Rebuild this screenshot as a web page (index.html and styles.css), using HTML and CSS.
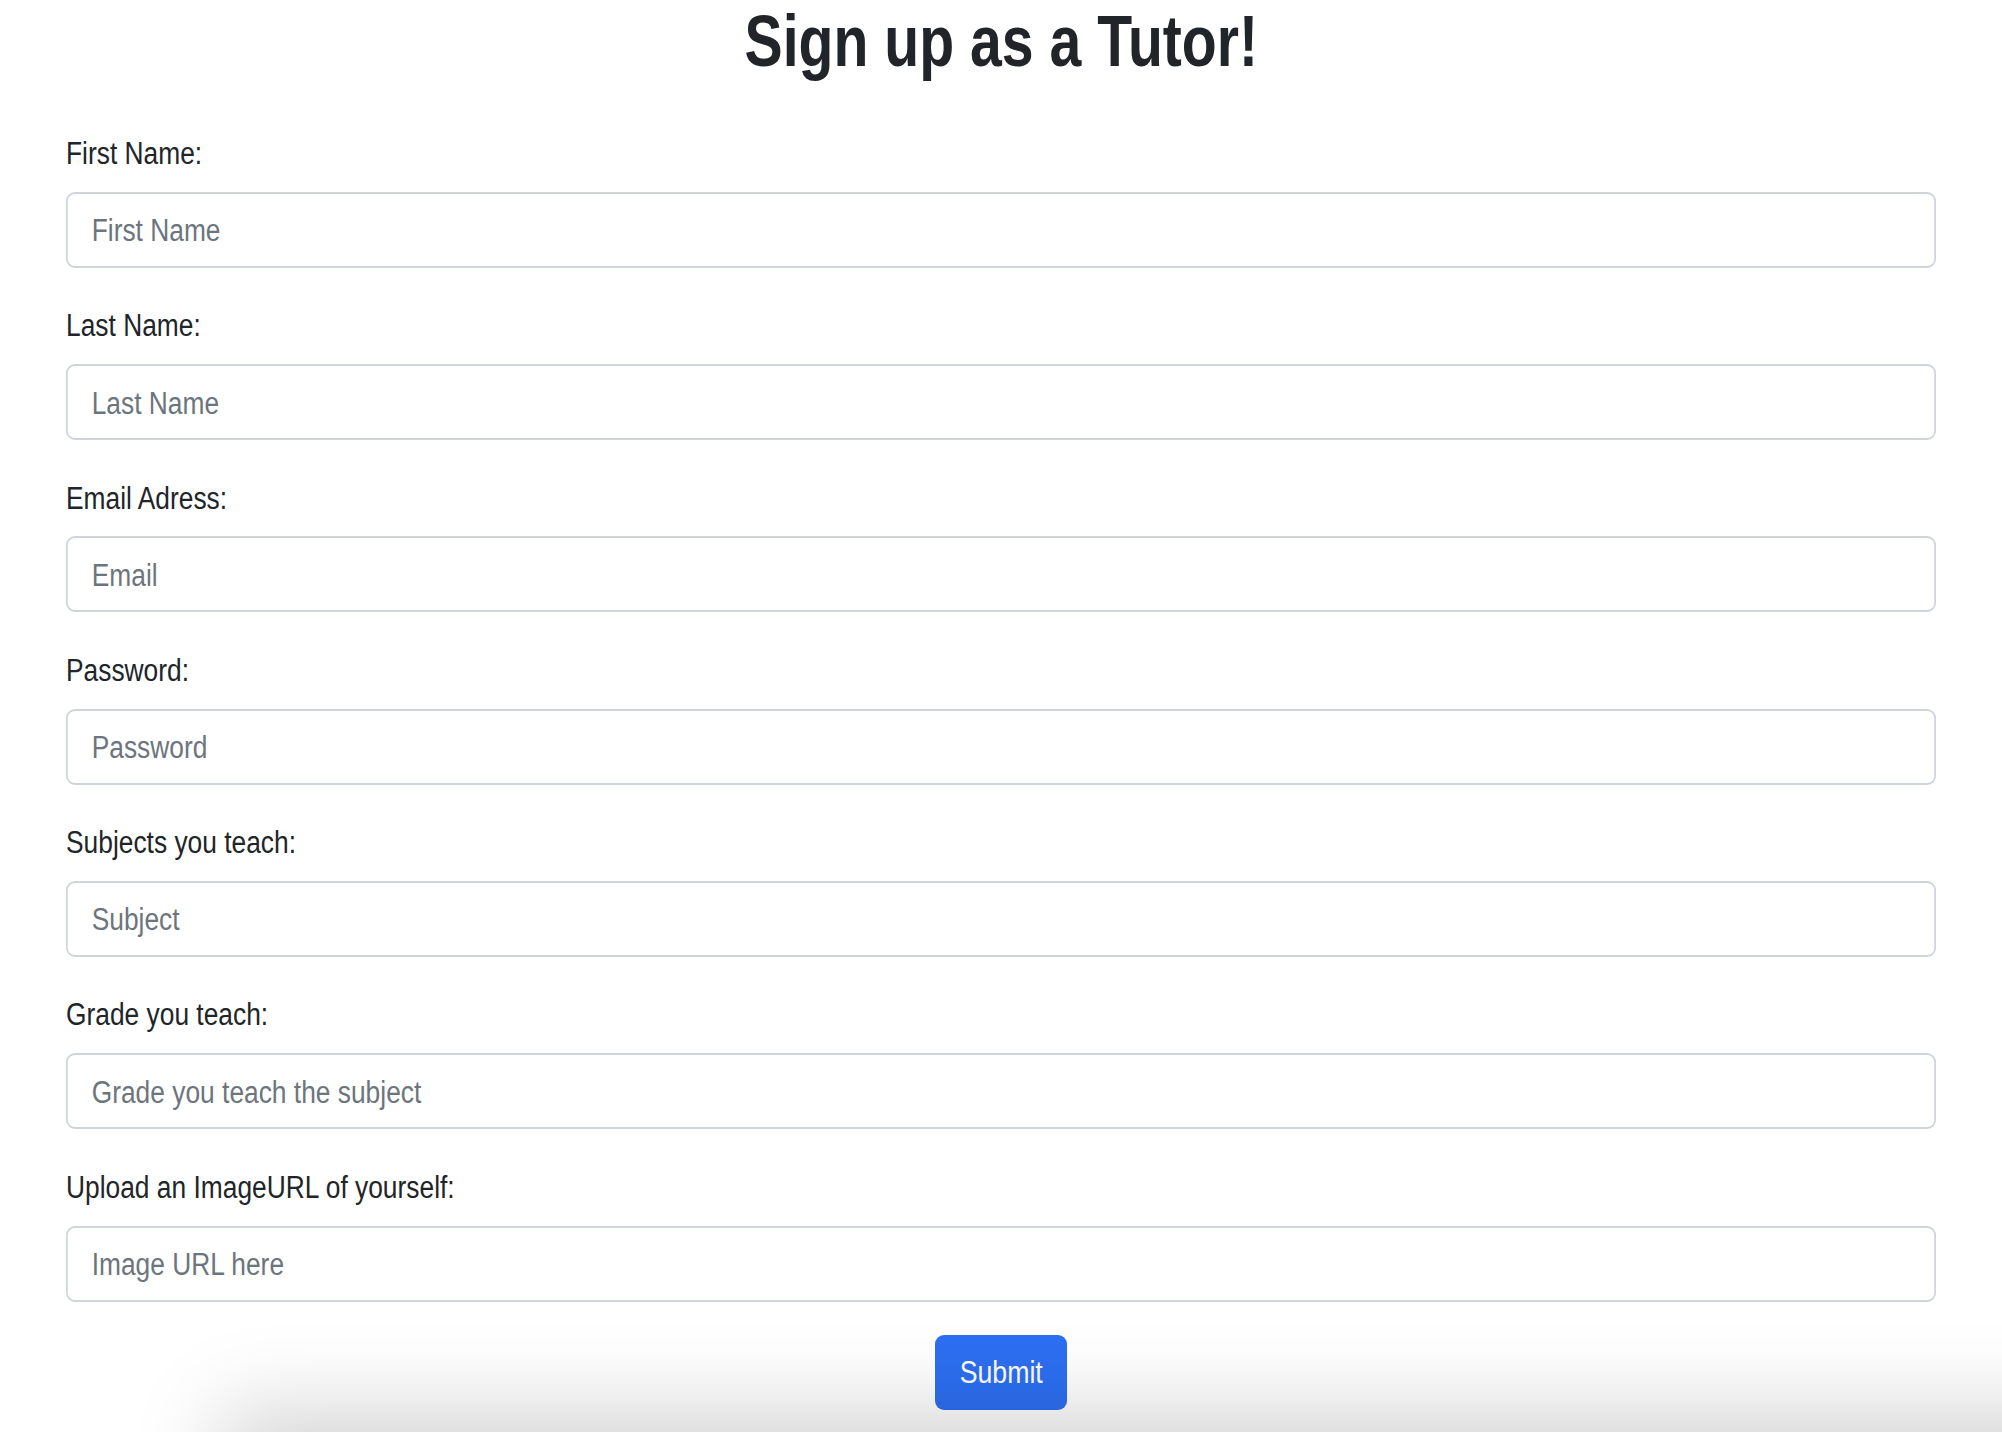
FILE: index.html
```html
<!DOCTYPE html>
<html lang="en">
<head>
<meta charset="utf-8">
<title>Sign up as a Tutor</title>
<link rel="stylesheet" href="styles.css">
</head>
<body>
<main class="page">
  <h1 class="title"><span class="title-text">Sign up as a Tutor!</span></h1>
  <form class="form">
    <div class="field">
      <label class="label" for="fn"><span class="narrow">First Name:</span></label>
      <input class="input" id="fn" type="text" placeholder="First Name">
    </div>
    <div class="field">
      <label class="label" for="ln"><span class="narrow">Last Name:</span></label>
      <input class="input" id="ln" type="text" placeholder="Last Name">
    </div>
    <div class="field">
      <label class="label" for="em"><span class="narrow">Email Adress:</span></label>
      <input class="input" id="em" type="email" placeholder="Email">
    </div>
    <div class="field">
      <label class="label" for="pw"><span class="narrow">Password:</span></label>
      <input class="input" id="pw" type="password" placeholder="Password">
    </div>
    <div class="field">
      <label class="label" for="sj"><span class="narrow">Subjects you teach:</span></label>
      <input class="input" id="sj" type="text" placeholder="Subject">
    </div>
    <div class="field">
      <label class="label" for="gr"><span class="narrow">Grade you teach:</span></label>
      <input class="input" id="gr" type="text" placeholder="Grade you teach the subject">
    </div>
    <div class="field">
      <label class="label" for="im"><span class="narrow">Upload an ImageURL of yourself:</span></label>
      <input class="input" id="im" type="text" placeholder="Image URL here">
    </div>
    <div class="actions">
      <button class="btn" type="submit"><span class="btn-text">Submit</span></button>
    </div>
  </form>
</main>
<div class="shade"></div>
</body>
</html>
```
FILE: styles.css
```css
html, body {
  margin: 0;
  padding: 0;
  background: #ffffff;
  overflow: hidden;
}
body {
  font-family: "Liberation Sans", Arial, Helvetica, sans-serif;
  color: #212529;
}
.page {
  padding: 1px 66px 0;
}
.title {
  margin: 0;
  font-size: 72px;
  line-height: 80px;
  font-weight: 700;
  text-align: center;
}
.title-text {
  display: inline-block;
  transform: scaleX(0.794);
  transform-origin: center;
}
.form {
  margin-top: 50px;
  display: flex;
  flex-direction: column;
}
.field {
  display: flex;
  flex-direction: column;
  align-items: flex-start;
  margin-bottom: 35.5px;
}
.label {
  font-size: 31px;
  line-height: 46px;
  margin-bottom: 14.8px;
}
.narrow {
  display: inline-block;
  transform: scaleX(0.85);
  transform-origin: left center;
  white-space: nowrap;
}
.input {
  box-sizing: border-box;
  height: 76px;
  width: 117.647%;
  transform: scaleX(0.85);
  transform-origin: left center;
  border-style: solid;
  border-color: #ced4da;
  border-width: 2px 2.353px;
  border-radius: 10.6px / 9px;
  padding: 3px 28.24px 0;
  font-family: inherit;
  font-size: 31px;
  color: #212529;
  background: #fff;
  outline: none;
}
.input::placeholder {
  color: #6c757d;
  opacity: 1;
}
.actions {
  display: flex;
  justify-content: center;
  margin-top: -2.5px;
}
.btn {
  box-sizing: border-box;
  width: 132px;
  height: 75px;
  border: none;
  border-radius: 9px;
  background: #2d6ff2;
  color: #fff;
  font-family: inherit;
  font-size: 31px;
  padding: 2px 0 0;
}
.btn-text {
  display: inline-block;
  transform: scaleX(0.86);
  transform-origin: center;
}
.shade {
  position: fixed;
  left: 240px;
  right: -200px;
  bottom: -200px;
  height: 200px;
  box-shadow: 0 0 90px 20px rgba(0, 0, 0, 0.18);
  background: #e0e0e0;
}
```
